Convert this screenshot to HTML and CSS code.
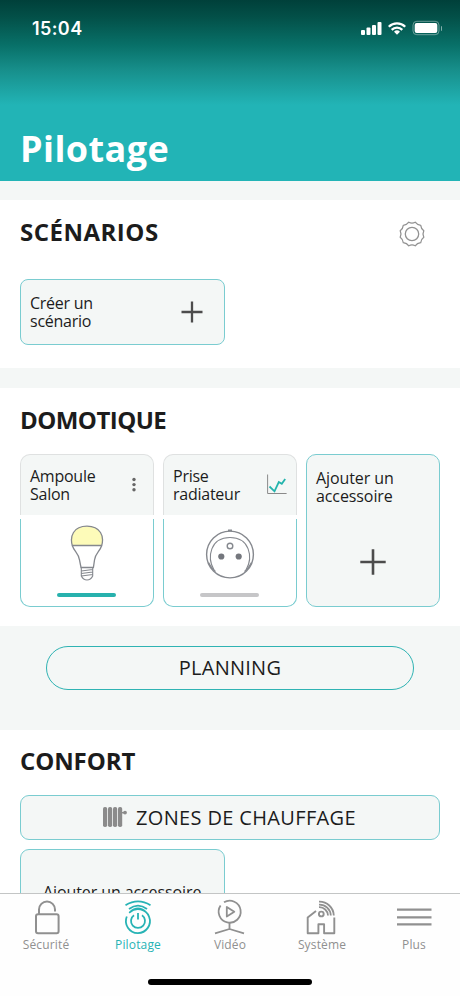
FILE: index.html
```html
<!DOCTYPE html>
<html lang="fr">
<head>
  <meta charset="UTF-8">
  <title>Pilotage</title>
  <meta name="viewport" content="width=device-width, initial-scale=1.0">
  <link rel="stylesheet" href="styles.css">
</head>
<body>
  <header class="header">
    <div class="status">
      <span class="time">15:04</span>
      <svg class="status-icons" width="80" height="16" viewBox="0 0 80 16">
        <g fill="#fff">
          <rect x="1" y="10" width="4" height="5" rx="1"/>
          <rect x="6.5" y="7.5" width="4" height="7.5" rx="1"/>
          <rect x="12" y="5" width="4" height="10" rx="1"/>
          <rect x="17.5" y="2" width="4" height="13" rx="1"/>
          <path d="M37 14.8l-3-3a4.3 4.3 0 0 1 6 0z"/>
          <rect x="54.7" y="3" width="22.6" height="10" rx="2"/>
        </g>
        <g fill="none" stroke="#fff" stroke-width="2.3">
          <path d="M28.8 6.8a11.6 11.6 0 0 1 16.4 0"/>
          <path d="M31.7 9.9a7.5 7.5 0 0 1 10.6 0"/>
        </g>
        <rect x="53" y="1.3" width="26" height="13.4" rx="3.8" fill="none" stroke="#fff" stroke-opacity=".4"/>
      </svg>
      <span class="battery-tip"></span>
    </div>
    <h1 class="title">Pilotage</h1>
  </header>

  <main class="content">
    <section class="section scenarios">
      <div class="section-head">
        <h2>SCÉNARIOS</h2>
        <svg class="gear" width="28" height="28" viewBox="-14 -14 28 28" fill="none" stroke="#929292" stroke-width="1.3" stroke-linejoin="round">
          <path d="M-3.2 -11.8 Q0 -10 3.2 -11.8 Q5.1 -9.2 8.7 -8.7 Q9 -5.2 11.8 -3.2 Q10.2 0 11.8 3.2 Q9 5.2 8.7 8.7 Q5.1 9.2 3.2 11.8 Q0 10 -3.2 11.8 Q-5.1 9.2 -8.7 8.7 Q-9 5.2 -11.8 3.2 Q-10.2 0 -11.8 -3.2 Q-9 -5.2 -8.7 -8.7 Q-5.1 -9.2 -3.2 -11.8Z"/>
          <circle r="6.7"/>
        </svg>
      </div>
      <div class="create">
        <span class="label">Créer un<br>scénario</span>
        <svg width="22" height="22" viewBox="0 0 22 22" stroke="#4c4c4c" stroke-width="2.3"><path d="M11 .5v21M.5 11h21"/></svg>
      </div>
    </section>

    <section class="section domotique">
      <h2>DOMOTIQUE</h2>
      <div class="cards">
        <div class="card">
          <div class="card-head">
            <span class="label">Ampoule<br>Salon</span>
            <svg class="dots" width="6" height="16" viewBox="0 0 6 16" fill="#666"><circle cx="3" cy="2.5" r="1.7"/><circle cx="3" cy="7.6" r="1.7"/><circle cx="3" cy="12.7" r="1.7"/></svg>
          </div>
          <div class="card-body">
            <svg width="34" height="58" viewBox="0 0 34 58" fill="none" stroke="#85888e" stroke-width="1.3">
              <path d="M2.3 21.5C1 17 1.3 12 3.5 8.5C6.5 3.8 11 2.2 17 2.2s10.500 1.600 13.500 6.300c2.200 3.500 2.500 8.500 1.200 13z" fill="#fdfbb9"/>
              <path d="M2.300 21.500C4 27.500 9 29.500 9.500 36L11 43.500h12.400L24.500 36c.5-6.500 5.500-8.500 7.200-14.500"/>
              <path d="M11.300 43.500v8.500q2 4 5.700 4t5.700-4V43.500M11.300 47l11.400-1.500M11.300 49.500l11.400-1.500M11.300 52l11.400-1.500" stroke-width="1.1"/>
            </svg>
            <span class="bar on"></span>
          </div>
        </div>
        <div class="card">
          <div class="card-head">
            <span class="label">Prise<br>radiateur</span>
            <svg class="chart" width="20" height="21" viewBox="0 0 20 21" fill="none">
              <path d="M.6 .5v19h19" stroke="#8a8a8a"/>
              <path d="M2.500 12.500l5 4.800 4.300-9.300 3 1.800 3.400-4.800" stroke="#23b4ad" stroke-width="1.800"/>
            </svg>
          </div>
          <div class="card-body">
            <svg width="50" height="58" viewBox="0 0 50 58" fill="none" stroke="#85888e" stroke-width="1.400">
              <circle cx="25" cy="30.500" r="23.400"/>
              <path d="M9 46C1.500 33 5.500 13.500 25 13.500S48.500 33 41 46" stroke-width="1.100"/>
              <path d="M3.500 38.500Q7 45 10.500 47.500M46.500 38.500Q43 45 39.500 47.500" stroke-width="1.300"/>
              <path d="M23 6.500h4" stroke-width="2"/>
              <circle cx="25" cy="22" r="2.800"/>
              <g fill="#74777d" stroke="none"><circle cx="16.300" cy="32.500" r="3.100"/><circle cx="33.700" cy="32.500" r="3.100"/></g>
            </svg>
            <span class="bar"></span>
          </div>
        </div>
        <div class="card add">
          <span class="label">Ajouter un<br>accessoire</span>
          <svg width="26" height="26" viewBox="0 0 26 26" stroke="#4c4c4c" stroke-width="2.600"><path d="M13 .3v25.400M.3 13h25.400"/></svg>
        </div>
      </div>
    </section>

    <div class="planning">
      <button class="pill">PLANNING</button>
    </div>

    <section class="section confort">
      <h2>CONFORT</h2>
      <div class="zones">
        <svg width="24" height="20" viewBox="0 0 24 20" fill="#8b8b8b">
          <rect y="0" width="4.200" height="20" rx="1.800"/>
          <rect x="5" width="4.200" height="20" rx="1.800"/>
          <rect x="10" width="4.200" height="20" rx="1.800"/>
          <rect x="15" width="4.200" height="20" rx="1.800"/>
          <path d="M18 5h3v1.400h-3z"/><circle cx="22" cy="5.600" r="1.900"/>
        </svg>
        <span>ZONES DE CHAUFFAGE</span>
      </div>
      <div class="accessory">Ajouter un accessoire</div>
    </section>
  </main>

  <nav class="tabs">
    <a class="tab">
      <svg width="44" height="40" viewBox="0 0 44 40" stroke-width="2">
        <rect x="12" y="17.300" width="22.600" height="19" rx="2"/>
        <path d="M15 17v-4.500a8 8 0 0 1 16 0V14.500"/>
      </svg>
      <span>Sécurité</span>
    </a>
    <a class="tab active">
      <svg width="44" height="40" viewBox="0 0 44 40" stroke-width="1.800">
        <path d="M9.500 8.300Q22 .5 34.500 8.300M13 12Q22 5.300 31 12"/>
        <path d="M10.800 19.500A12 12 0 1 0 13.700 15.300Q22 7.800 30.300 15.300"/>
        <path d="M18 18.200a7 7 0 1 0 8 0M22 16v6.500"/>
      </svg>
      <span>Pilotage</span>
    </a>
    <a class="tab">
      <svg width="44" height="40" viewBox="0 0 44 40" stroke-width="1.800">
        <path d="M12.600 8.500A11 11 0 1 0 16 5.300"/>
        <path d="M18.800 10v9.500l7.500-4.700zM21.500 26v6M7 36.300l14.500-4.300L36 36.300"/>
      </svg>
      <span>Vidéo</span>
    </a>
    <a class="tab">
      <svg class="house" width="44" height="40" viewBox="0 0 44 40" stroke-width="1.900">
        <path d="M17 14L8.700 20.500V36.200h10.700v-9h5.700v9h10.200V20.500"/>
        <circle cx="22.300" cy="17" r="2.400"/>
        <path d="M20 4.700A14.300 14.300 0 0 1 34.800 18.500M20 7.600A11.300 11.300 0 0 1 31.800 18.500M20 10.200A8.600 8.600 0 0 1 29 18.500" stroke-width="1.800"/>
      </svg>
      <span>Système</span>
    </a>
    <a class="tab">
      <svg width="44" height="40" viewBox="0 0 44 40" stroke-width="2.200">
        <path d="M5 12.700h34.500M5 20.400h34.500M5 27.400h34.500"/>
      </svg>
      <span>Plus</span>
    </a>
    <div class="home"></div>
  </nav>
</body>
</html>
```

FILE: styles.css
```css
* {
  box-sizing: border-box;
}
body {
  margin: 0;
  height: 996px;
  display: flex;
  flex-direction: column;
  overflow: hidden;
  background: #f4f7f6;
  color: #1c1c1c;
  font-family: "Open Sans", "Noto Sans", sans-serif;
}
svg {
  display: block;
  flex: none;
}
h1, h2 {
  margin: 0;
  font-weight: 700;
}
.header {
  height: 181px;
  flex: none;
  display: flex;
  flex-direction: column;
  justify-content: space-between;
  padding: 17px 18px 8px 20px;
  background: linear-gradient(#00403a 0, #035149 18px, #087068 45px, #178f8b 70px, #22b4b6 105px);
  color: #fff;
}
.status {
  display: flex;
  align-items: center;
  height: 22px;
}
.time {
  margin-left: 12px;
  padding-top: 1px;
  flex: 1;
  font: 600 18px/22px Inter, sans-serif;
  letter-spacing: 0.4px;
}
.battery-tip {
  width: 1.5px;
  height: 5px;
  margin-left: 1px;
  border-radius: 0 2px 2px 0;
  background: rgba(255,255,255,0.5);
}
.title {
  font-size: 36px;
  line-height: 48px;
  letter-spacing: 0.4px;
}
.content {
  flex: 1;
  min-height: 0;
  overflow: hidden;
  padding-top: 19px;
}
.section {
  background: #fff;
  padding: 0 20px;
}
h2 {
  font-size: 24px;
  line-height: 32px;
  letter-spacing: 0.5px;
}
.domotique h2 {
  letter-spacing: -0.55px;
}
.confort h2 {
  letter-spacing: -0.1px;
}
.label {
  font-size: 16px;
  line-height: 18px;
  letter-spacing: -0.25px;
}
.scenarios {
  height: 168px;
  padding-top: 16px;
  margin-bottom: 20px;
}
.section-head {
  display: flex;
  justify-content: space-between;
  padding-right: 14px;
}
.gear {
  margin-top: 4px;
}
.create {
  width: 205px;
  height: 66px;
  margin-top: 31px;
  padding: 0 21px 0 9px;
  display: flex;
  align-items: center;
  justify-content: space-between;
  background: #f4f7f6;
  border: 1px solid #7accd0;
  border-radius: 8px;
}
.create .label {
  padding-bottom: 1px;
}
.domotique {
  height: 238px;
  padding-top: 16px;
}
.cards {
  display: grid;
  grid-template-columns: repeat(3, 1fr);
  gap: 9px;
  margin-top: 18px;
}
.card {
  height: 153px;
  display: flex;
  flex-direction: column;
}
.card-head {
  height: 61px;
  display: flex;
  justify-content: space-between;
  padding: 12px 9px 0;
  background: #f4f7f6;
  border: 1px solid #dfe1e1;
  border-bottom: 0;
  border-radius: 10px 10px 0 0;
}
.dots {
  margin: 10px 7px 0 0;
}
.chart {
  margin-top: 7px;
}
.card-body {
  height: 88px;
  margin-top: 4px;
  display: flex;
  flex-direction: column;
  align-items: center;
  padding: 5px 1px 0 0;
  border: 1px solid #7accd0;
  border-top: 0;
  border-radius: 0 0 10px 10px;
}
.bar {
  width: 59px;
  height: 4px;
  margin-top: 11px;
  border-radius: 2px;
  background: #c6c6c8;
}
.bar.on {
  background: #27b1ad;
}
.add {
  padding: 14px 9px;
  background: #f4f7f6;
  border: 1px solid #7accd0;
  border-radius: 10px;
}
.add .label {
  letter-spacing: -0.1px;
}
.add svg {
  align-self: center;
  margin-top: 44px;
}
.planning {
  height: 104px;
  padding: 20px 46px;
}
.pill {
  display: block;
  width: 368px;
  height: 44px;
  padding: 0;
  background: transparent;
  border: 1px solid #2fb3b3;
  border-radius: 22px;
  color: #1c1c1c;
  font: 20px/42px "Open Sans", sans-serif;
  letter-spacing: 0.25px;
}
.confort {
  height: 260px;
  padding-top: 15px;
}
.zones {
  height: 45px;
  margin-top: 18px;
  display: flex;
  align-items: center;
  padding: 0 0 1px 82px;
  gap: 9px;
  background: #f4f7f6;
  border: 1px solid #7accd0;
  border-radius: 9px;
  font-size: 20px;
  letter-spacing: 0.35px;
}
.accessory {
  width: 205px;
  height: 100px;
  margin-top: 9px;
  padding: 31px 0 0 22px;
  background: #f4f7f6;
  border: 1px solid #7accd0;
  border-radius: 9px;
  font-size: 16px;
  line-height: 22px;
  letter-spacing: -0.1px;
  white-space: nowrap;
}
.tabs {
  height: 103px;
  flex: none;
  display: grid;
  grid-template-columns: repeat(5, 1fr);
  grid-template-rows: 85px 6px;
  background: #fefefe;
  border-top: 1px solid #c3c5c5;
}
.tab {
  display: flex;
  flex-direction: column;
  align-items: center;
  padding-top: 3px;
  color: #909090;
  font-size: 12px;
  line-height: 16px;
  letter-spacing: 0.15px;
}
.tab svg {
  fill: none;
  stroke: currentColor;
  stroke-linejoin: round;
}
.tab .house {
  margin-left: -2px;
}
.tab.active {
  color: #27b3b5;
}
.home {
  grid-column: 1 / -1;
  justify-self: center;
  width: 164px;
  height: 6px;
  border-radius: 3px;
  background: #000;
}
```
